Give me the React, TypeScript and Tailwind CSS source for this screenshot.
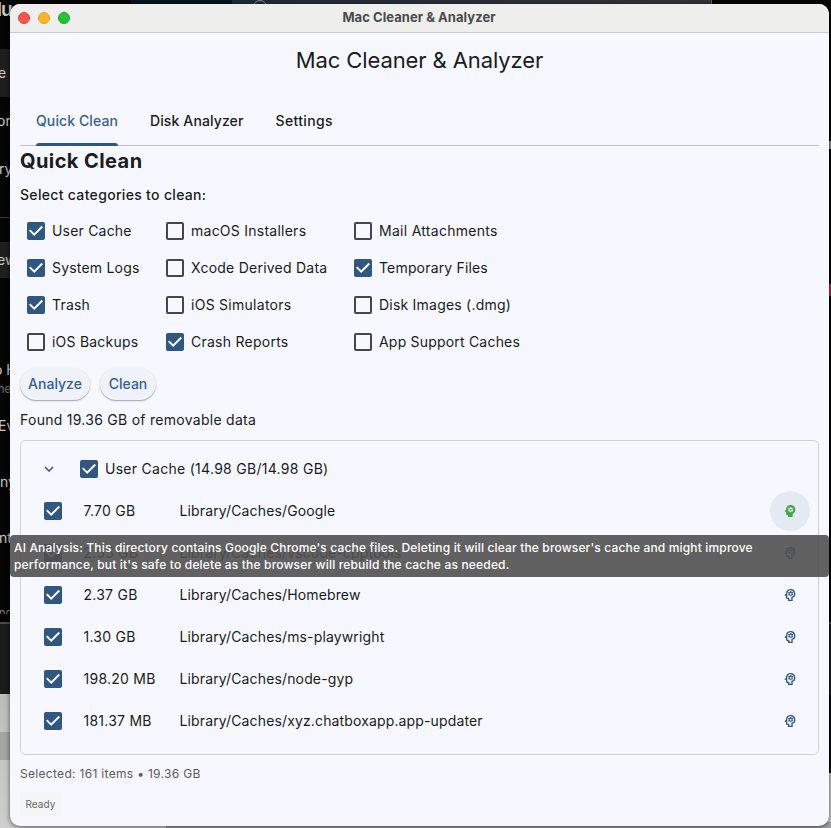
import { MdExpandMore } from "react-icons/md";

function Checkbox({ checked = false }: { checked?: boolean }) {
  if (!checked) {
    return <span className="block size-[18px] shrink-0 rounded-[2px] border-2 border-[#43454f]" />;
  }
  return (
    <span className="block size-[18px] shrink-0 rounded-[2px] bg-[#305682]">
      <svg viewBox="0 0 18 18" className="size-full" fill="none" stroke="#ffffff" strokeWidth="2">
        <path d="M2.7 8.1 L7.2 12.6 L15.3 4.5" />
      </svg>
    </span>
  );
}

/* Gear inside the head: a ring with six teeth around (13, 10). */
function Gear() {
  return (
    <>
      <circle cx="13" cy="10" r="2.3" fill="none" strokeWidth="1.6" />
      <path
        fill="none"
        strokeWidth="1.7"
        d="M13 7.4V6 M13 12.6V14 M15.25 8.7L16.46 8 M15.25 11.3L16.46 12 M10.75 8.7L9.54 8 M10.75 11.3L9.54 12"
      />
    </>
  );
}

function HeadFilled() {
  return (
    <svg viewBox="0 0 24 24" className="size-4">
      <path
        fill="#43a747"
        d="M13 3C9.25 3 6.2 5.94 6.02 9.64L4.1 12.2c-.25.33-.01.8.4.8H6v3c0 1.1.9 2 2 2h1v3h7v-4.68c2.36-1.12 4-3.53 4-6.32 0-3.87-3.13-7-7-7z"
      />
      <g stroke="#f2f7f4">
        <Gear />
      </g>
    </svg>
  );
}

function HeadOutlined() {
  return (
    <svg viewBox="0 0 24 24" className="size-4" stroke="#305682">
      <path
        fill="none"
        strokeWidth="2"
        d="M10 20v-3H8a1 1 0 0 1-1-1v-4H5.4L7 9.9A6 6 0 1 1 15 15.66V20z"
      />
      <Gear />
    </svg>
  );
}

type Category = { label: string; checked: boolean; tracking: string };

const columns: { width: string; items: Category[] }[] = [
  {
    width: "w-[139px]",
    items: [
      { label: "User Cache", checked: true, tracking: "tracking-[0.2px]" },
      { label: "System Logs", checked: true, tracking: "tracking-[0.2px]" },
      { label: "Trash", checked: true, tracking: "tracking-[0.2px]" },
      { label: "iOS Backups", checked: false, tracking: "tracking-[0.22px]" },
    ],
  },
  {
    width: "w-[188px]",
    items: [
      { label: "macOS Installers", checked: false, tracking: "tracking-[0.25px]" },
      { label: "Xcode Derived Data", checked: false, tracking: "tracking-[0.24px]" },
      { label: "iOS Simulators", checked: false, tracking: "tracking-[0.27px]" },
      { label: "Crash Reports", checked: true, tracking: "tracking-[0.25px]" },
    ],
  },
  {
    width: "w-[200px]",
    items: [
      { label: "Mail Attachments", checked: false, tracking: "tracking-[0.28px]" },
      { label: "Temporary Files", checked: true, tracking: "tracking-[0.17px]" },
      { label: "Disk Images (.dmg)", checked: false, tracking: "tracking-[0.22px]" },
      { label: "App Support Caches", checked: false, tracking: "tracking-[0.2px]" },
    ],
  },
];

const rows = [
  { size: "7.70 GB", path: "Library/Caches/Google", analyzed: true },
  { size: "2.55 GB", path: "Library/Caches/vscode-cpptools", analyzed: false },
  { size: "2.37 GB", path: "Library/Caches/Homebrew", analyzed: false },
  { size: "1.30 GB", path: "Library/Caches/ms-playwright", analyzed: false },
  { size: "198.20 MB", path: "Library/Caches/node-gyp", analyzed: false },
  { size: "181.37 MB", path: "Library/Caches/xyz.chatboxapp.app-updater", analyzed: false },
];

/* Other windows and the wallpaper that show around the app window. */
function Desktop() {
  return (
    <div className="absolute inset-0 overflow-hidden bg-[#050506] text-[14px] leading-[16px] text-[#c8c8c8]">
      <div className="absolute top-0 left-[131px] h-[6px] w-[101px] bg-[#04131c]" />
      <div className="absolute top-0 left-[232px] h-[6px] w-[480px] border-r border-[#5a5c60] bg-linear-to-r from-[#1f2c35] to-[#33323a]" />
      <div className="absolute top-0 left-[253px] size-[14px] rounded-full border border-[#7d8a92]" />
      <div className="absolute top-[49px] left-0 h-[48px] w-[12px] bg-[#1e1e1e]" />
      <div className="absolute top-[217px] left-0 h-px w-[12px] bg-[#3a3a3a]" />
      <div className="absolute top-[242px] left-0 h-[36px] w-[12px] bg-[#1e1e1e]" />
      <div className="absolute top-[-1px] left-[-3px] text-[19px] leading-[22px] font-semibold tracking-[-1px]">lu</div>
      <div className="absolute top-[65px] left-[-2px]">e</div>
      <div className="absolute top-[113px] left-[-3px]">ore</div>
      <div className="absolute top-[161px] left-[-1px]">ry</div>
      <div className="absolute top-[252px] left-[-3px]">ew</div>
      <div className="absolute top-[362px] left-[-6px] whitespace-nowrap">o H</div>
      <div className="absolute top-[381px] left-[-2px] text-[11px] text-[#777777]">ne</div>
      <div className="absolute top-[418px] left-[-2px]">Ev</div>
      <div className="absolute top-[474px] left-0">ny</div>
      <div className="absolute top-[530px] left-[-1px]">nt</div>
      <div className="absolute top-[605px] left-[-1px] text-[11px] text-[#777777]">no.</div>
      <div className="absolute top-[614px] left-0 h-[10px] w-[12px] bg-[#050506]" />
      <div className="absolute top-[622px] left-0 h-[72px] w-full border-t-2 border-[#4a4a4a] bg-[#1b1b1b]" />
      <div className="absolute top-[694px] left-0 h-[134px] w-full bg-linear-to-b from-[#bcbcb9] to-[#cfcfcd]" />
      <div className="absolute top-[732px] left-0 h-[28px] w-[12px] bg-[#a5a5a3]" />
      <div className="absolute top-[694px] right-0 h-[79px] w-[6px] bg-[#0c0c0d]" />
      <div className="absolute right-0 bottom-0 h-[6px] w-[665px] bg-[#a2a2a2]" />
      <div className="absolute top-[141px] right-0 h-[8px] w-[2px] bg-[#8a8a8a]" />
      <div className="absolute top-[284px] right-0 h-[12px] w-[2px] bg-[#a92c40]" />
    </div>
  );
}

export default function App() {
  return (
    <div className="relative h-[828px] w-[831px] overflow-hidden font-['Inter','Liberation_Sans',sans-serif] text-[#191c20]">
      <Desktop />
      <div className="absolute top-[4px] left-[10px] flex h-[822px] w-[819px] flex-col rounded-[10px] bg-[#f7f8ff] shadow-[0_1px_5px_rgba(0,0,0,0.6)]">
        <header className="relative flex h-[29px] shrink-0 items-center justify-center rounded-t-[10px] border-b border-[#c9cad6] bg-[#eeeeec]">
          <div className="absolute left-[8px] flex gap-[8px]">
            <span className="size-[12px] rounded-full border border-[#e0443e] bg-[#ff544d]" />
            <span className="size-[12px] rounded-full border border-[#dea123] bg-[#feb429]" />
            <span className="size-[12px] rounded-full border border-[#1aab29] bg-[#25c138]" />
          </div>
          <h1 className="pb-[2px] pr-[1px] text-[13px] leading-4 font-bold tracking-[0.05px] text-[#4a4a4a]">Mac Cleaner &amp; Analyzer</h1>
        </header>

        <main className="flex flex-col px-[10px]">
          <h2 className="flex h-[53px] items-center justify-center text-[22px] leading-7 tracking-[-0.1px]">
            <span>Mac Cleaner &amp; Analyzer</span>
          </h2>
          <nav className="mt-[11px] flex h-[49px] gap-8 border-b border-[#bfc0ca] px-4 text-[14px] leading-5 font-medium">
            <div className="relative flex w-[82px] items-center tracking-[0.1px] text-[#37608f]">
              <span className="whitespace-nowrap">Quick Clean</span>
              <span className="absolute inset-x-0 -bottom-px h-[3px] rounded-t-[3px] bg-[#305682]" />
            </div>
            <div className="flex w-[93px] items-center tracking-[0.12px] whitespace-nowrap">Disk Analyzer</div>
            <div className="flex items-center pl-[0.5px] tracking-[0.35px]">Settings</div>
          </nav>

          <h3 className="flex h-[30px] items-center text-[20px] font-bold tracking-[0.42px]">Quick Clean</h3>
          <p className="flex h-[36px] items-center text-[14px] font-medium tracking-[0.32px]">Select categories to clean:</p>

          <div className="flex pl-[7px]">
            {columns.map((column) => (
              <div key={column.width} className={column.width}>
                {column.items.map((item) => (
                  <label key={item.label} className="flex h-[37px] items-center gap-[7px] text-[14px] whitespace-nowrap">
                    <Checkbox checked={item.checked} />
                    <span className={item.tracking}>{item.label}</span>
                  </label>
                ))}
              </div>
            ))}
          </div>

          <div className="mt-[8px] flex gap-[10px] text-[14px] leading-5 font-medium text-[#37608f]">
            <button className="h-8 w-[70px] rounded-full bg-[#f0f2fa] shadow-[0_1px_1.5px_rgba(0,0,0,0.35)]">Analyze</button>
            <button className="h-8 w-[56px] rounded-full bg-[#f0f2fa] shadow-[0_1px_1.5px_rgba(0,0,0,0.35)]">Clean</button>
          </div>
          <p className="flex h-[40px] items-center pb-px text-[14px] leading-5 tracking-[0.27px]">Found 19.36 GB of removable data</p>

          <section className="h-[315px] rounded-[5px] border border-[#d0d1d6] pt-[7px]">
            <div className="flex h-[42px] items-center pl-[19px] text-[14px] leading-5">
              <MdExpandMore className="size-[18px] text-[#305682]" />
              <span className="w-[22px]" />
              <Checkbox checked />
              <span className="ml-[7px] pb-px tracking-[0.28px]">User Cache (14.98 GB/14.98 GB)</span>
            </div>
            {rows.map((row) => (
              <div key={row.path} className="flex h-[42px] items-center pr-[8px] pl-[23px] text-[14px] leading-5">
                <Checkbox checked />
                <span className="ml-[21px] w-[96px] pb-px pl-[0.5px] tracking-[0.25px]">{row.size}</span>
                <span className="flex-1 pb-px pl-[0.5px] tracking-[0.14px]">{row.path}</span>
                {row.analyzed ? (
                  <span className="flex size-[40px] items-center justify-center rounded-full bg-[#e4eaf4]">
                    <HeadFilled />
                  </span>
                ) : (
                  <span className="flex size-[40px] items-center justify-center">
                    <HeadOutlined />
                  </span>
                )}
              </div>
            ))}
          </section>

          <p className="flex h-[37px] items-center text-[12px] tracking-[0.31px] text-[#5a5a5c]">Selected: 161 items • 19.36 GB</p>
          <div className="flex h-[24px] w-[41px] items-center justify-center rounded-[3px] bg-[#f4f5f7] text-[10px] tracking-[0.1px] text-[#666666]">
            Ready
          </div>
        </main>

        <div className="absolute top-[531px] left-0 h-[42px] w-full rounded-[4px] bg-[#505050]/90 px-[4px] pt-[4px] text-[12px] leading-[17px] font-medium whitespace-nowrap text-white">
          <div className="tracking-[0.157px]">AI Analysis: This directory contains Google Chrome's cache files. Deleting it will clear the browser's cache and might improve</div>
          <div className="tracking-[0.175px]">performance, but it's safe to delete as the browser will rebuild the cache as needed.</div>
        </div>
      </div>
    </div>
  );
}
